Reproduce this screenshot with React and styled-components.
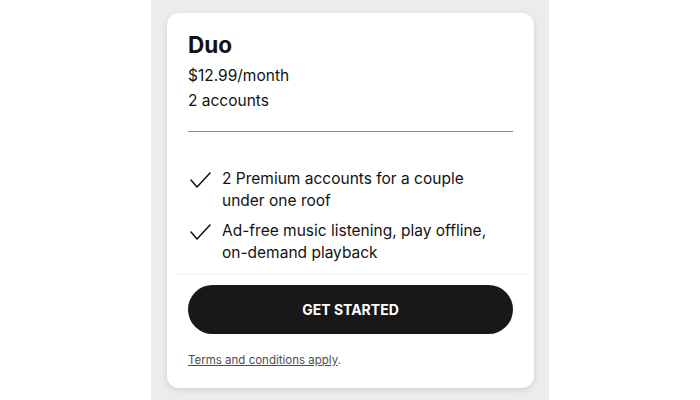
import React from 'react';
import styled, { createGlobalStyle } from 'styled-components';

const GlobalStyle = createGlobalStyle`
  html, body {
    margin: 0;
    padding: 0;
    background: #ffffff;
  }
  body {
    font-family: Inter, "Noto Sans", "Liberation Sans", sans-serif;
    color: #121212;
  }
`;

const Page = styled.div`
  display: flex;
  justify-content: center;
  height: 400px;
`;

const Column = styled.div`
  width: 398px;
  background: #ececec;
  padding: 13px 15px 12px 16px;
  box-sizing: border-box;
`;

const Card = styled.div`
  background: #ffffff;
  border-radius: 12px;
  box-shadow: 0 2px 6px rgba(0, 0, 0, 0.12);
  height: 100%;
  display: flex;
  flex-direction: column;
  box-sizing: border-box;
`;

const Header = styled.div`
  padding: 18px 21px 0;
`;

const Title = styled.h2`
  margin: 0;
  font-size: 22.5px;
  font-weight: 700;
  line-height: 28px;
`;

const Meta = styled.div`
  font-size: 15.5px;
  line-height: 25px;
  margin-top: ${(props) => props.mt || 0}px;
`;

const Divider = styled.hr`
  border: none;
  border-top: 1px solid #8a8a8a;
  margin: 18px 0 0;
`;

const Features = styled.ul`
  list-style: none;
  margin: 0 4px 0 9px;
  padding: 36px 21px 10px 12px;
  display: flex;
  flex-direction: column;
  gap: 8px;
  border-bottom: 1px solid #f3f3f3;
`;

const Feature = styled.li`
  display: flex;
  gap: 11px;
  font-size: 15.5px;
  line-height: 22px;
`;

const Check = styled.svg`
  flex: none;
  width: 23px;
  height: 22px;
  margin-top: 2px;
`;

const Footer = styled.div`
  padding: 10px 21px 0;
  display: flex;
  flex-direction: column;
`;

const Button = styled.button`
  height: 49px;
  border: none;
  border-radius: 25px;
  background: #181818;
  color: #ffffff;
  font-family: inherit;
  font-size: 14px;
  font-weight: 700;
  letter-spacing: 0;
`;

const Terms = styled.p`
  margin: 19px 0 0;
  font-size: 11.5px;
  color: #4d4d4d;

  a {
    color: inherit;
    text-decoration: underline;
  }
`;

const features = [
  ['2 Premium accounts for a couple', 'under one roof'],
  ['Ad-free music listening, play offline,', 'on-demand playback'],
];

function CheckIcon() {
  return (
    <Check viewBox="0 0 23 22" fill="none">
      <polyline points="3,10 9,17 22,3" stroke="#121212" strokeWidth="1.5" strokeLinecap="round" strokeLinejoin="round" />
    </Check>
  );
}

export default function App() {
  return (
    <>
      <GlobalStyle />
      <Page>
        <Column>
          <Card>
            <Header>
              <Title>Duo</Title>
              <Meta mt={4}>$12.99/month</Meta>
              <Meta>2 accounts</Meta>
              <Divider />
            </Header>
            <Features>
              {features.map(([a, b]) => (
                <Feature key={a}>
                  <CheckIcon />
                  <span>
                    {a}
                    <br />
                    {b}
                  </span>
                </Feature>
              ))}
            </Features>
            <Footer>
              <Button type="button">GET STARTED</Button>
              <Terms>
                <a href="#terms">Terms and conditions apply</a>.
              </Terms>
            </Footer>
          </Card>
        </Column>
      </Page>
    </>
  );
}
